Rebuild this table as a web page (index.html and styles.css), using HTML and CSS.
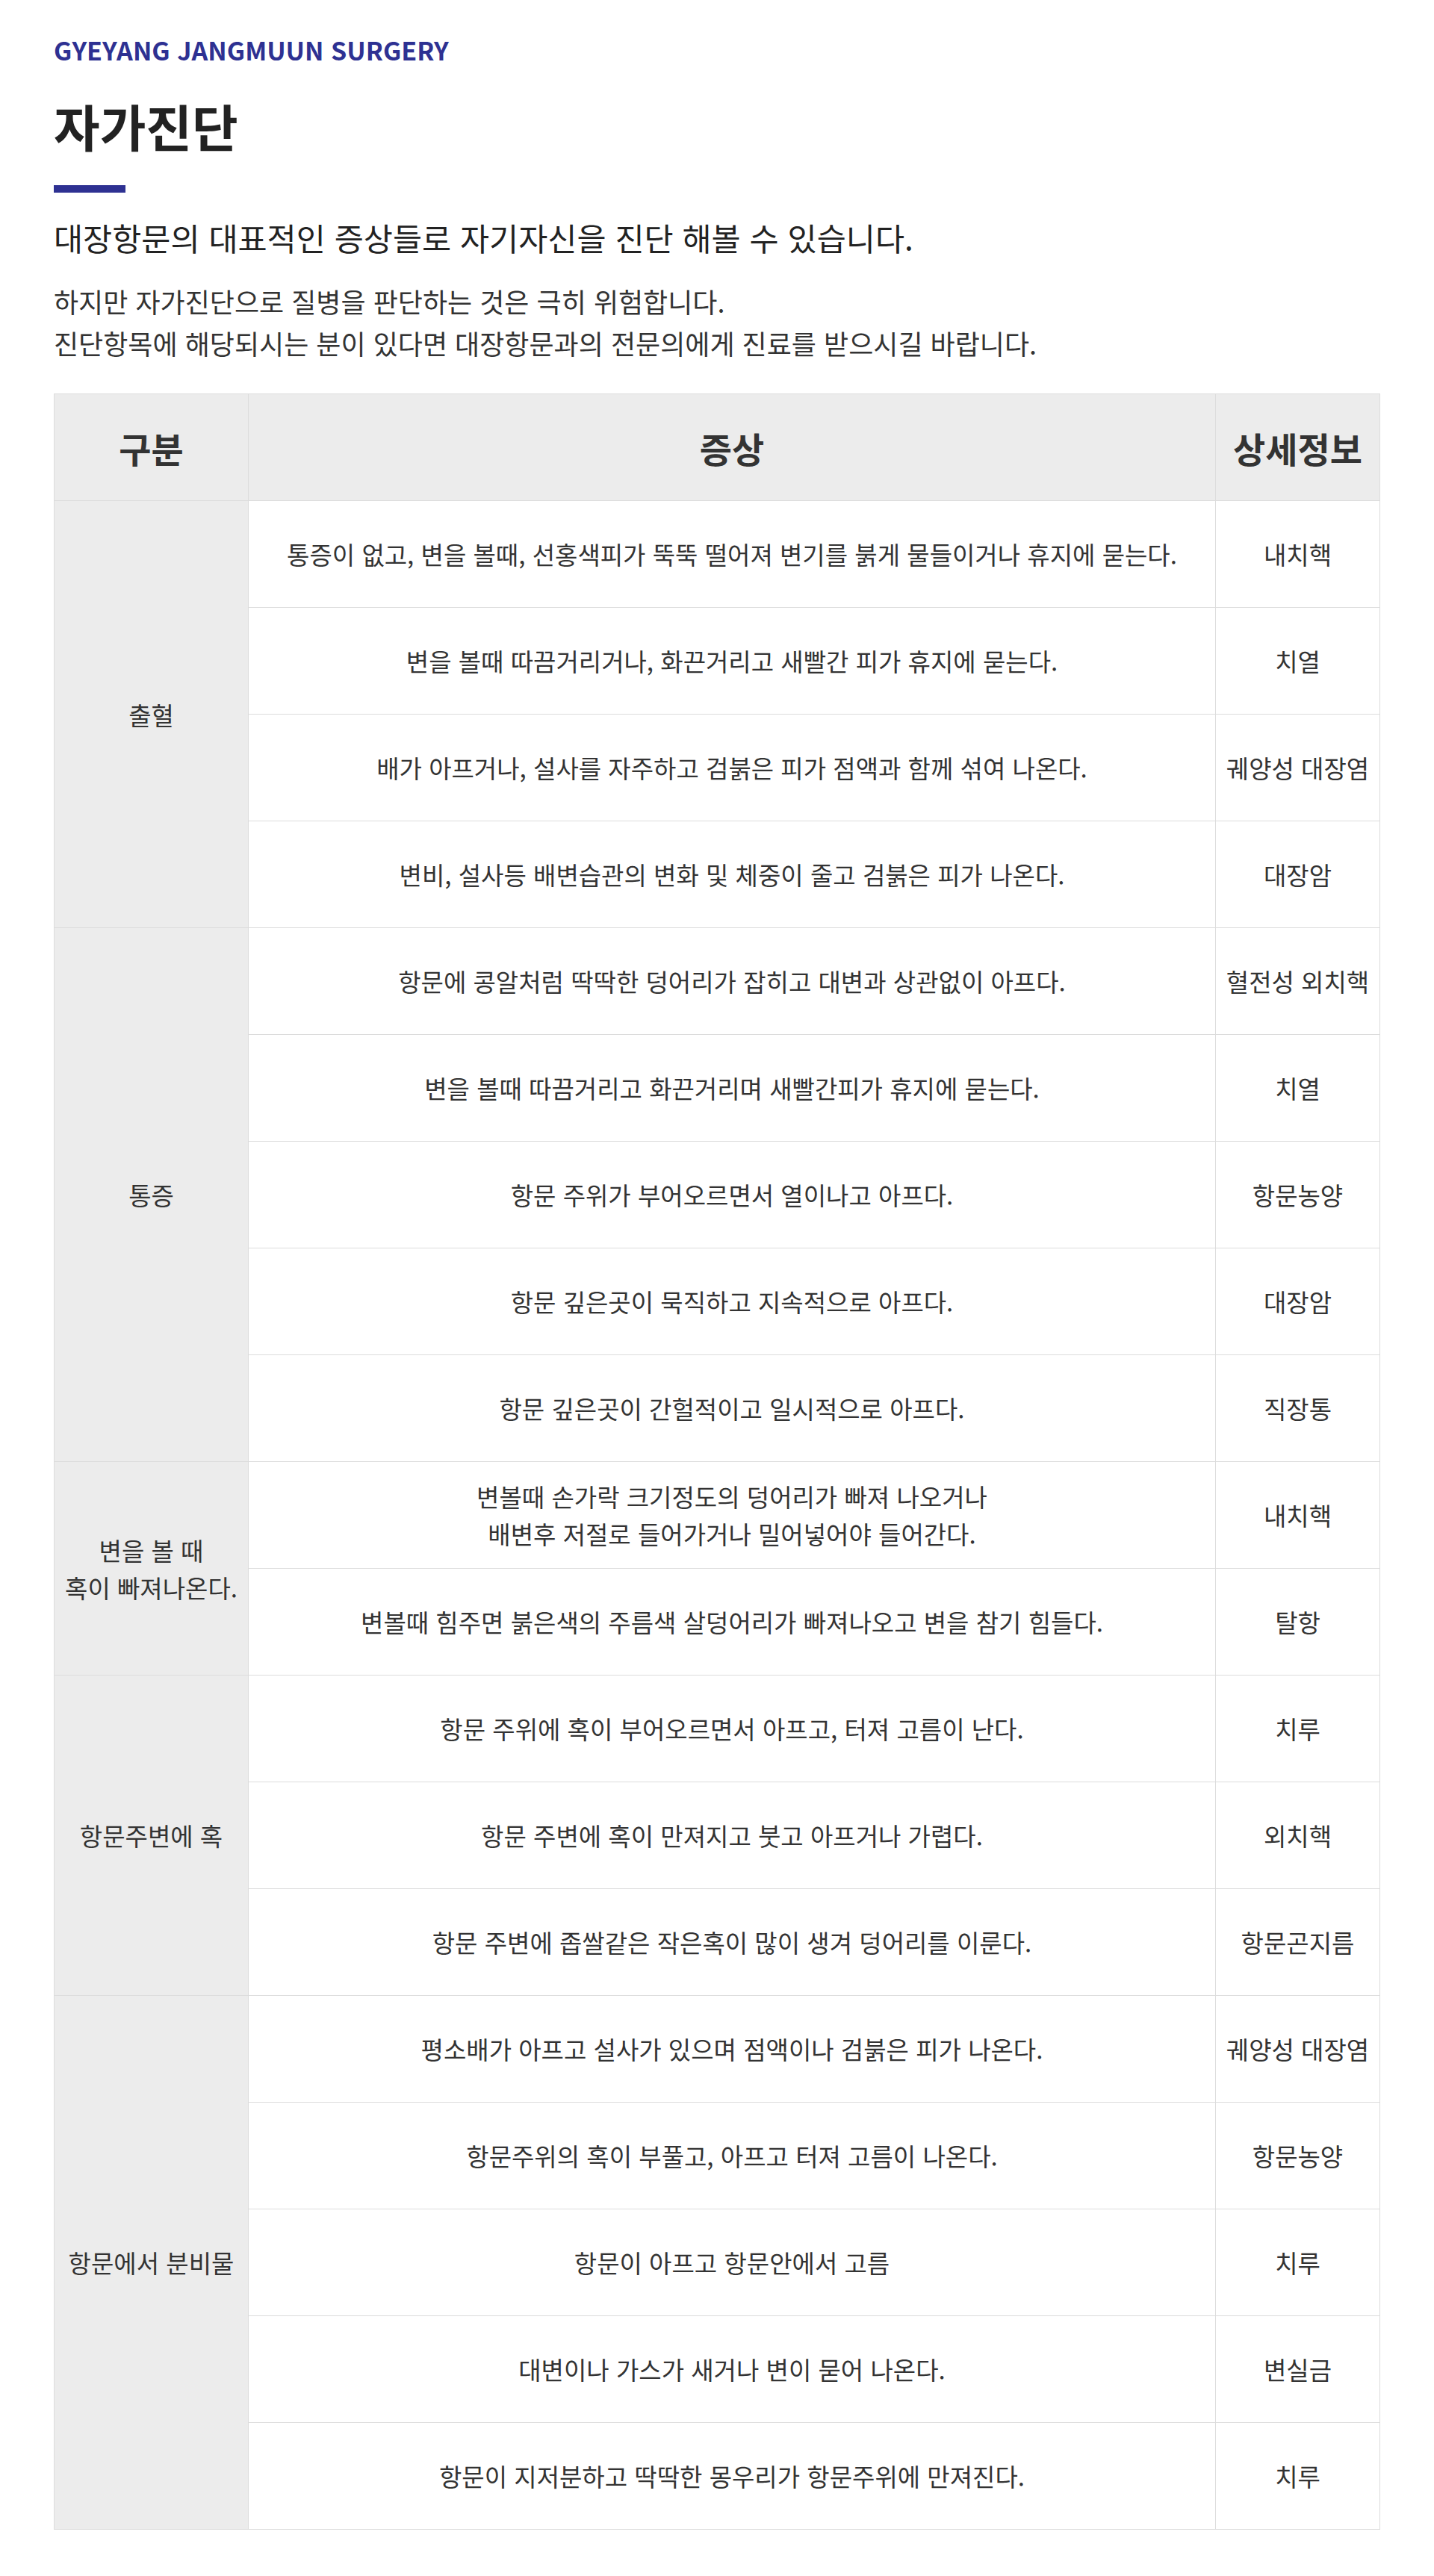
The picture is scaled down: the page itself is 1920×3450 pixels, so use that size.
FILE: index.html
```html
<!DOCTYPE html>
<html lang="ko">
  <head>
    <meta charset="UTF-8" />
    <meta name="viewport" content="width=device-width, initial-scale=1.0" />
    <title>자가진단 - 계양장무언외과</title>
    <link rel="stylesheet" href="styles.css">
  </head>
  <body>
    <main class="page">
      <p class="eyebrow">GYEYANG JANGMUUN SURGERY</p>
      <h1 class="page-title">자가진단</h1>
      <span class="title-bar"></span>
      <p class="lead">대장항문의 대표적인 증상들로 자기자신을 진단 해볼 수 있습니다.</p>
      <p class="notice">
        하지만 자가진단으로 질병을 판단하는 것은 극히 위험합니다.<br />
        진단항목에 해당되시는 분이 있다면 대장항문과의 전문의에게 진료를 받으시길 바랍니다.
      </p>

      <table class="diag-table">
        <colgroup>
          <col class="col-group" />
          <col class="col-symptom" />
          <col class="col-info" />
        </colgroup>
        <thead>
          <tr>
            <th>구분</th>
            <th>증상</th>
            <th>상세정보</th>
          </tr>
        </thead>
        <tbody>
          <tr>
            <th class="group" rowspan="4">출혈</th>
            <td>통증이 없고, 변을 볼때, 선홍색피가 뚝뚝 떨어져 변기를 붉게 물들이거나 휴지에 묻는다.</td>
            <td>내치핵</td>
          </tr>
          <tr>
            <td>변을 볼때 따끔거리거나, 화끈거리고 새빨간 피가 휴지에 묻는다.</td>
            <td>치열</td>
          </tr>
          <tr>
            <td>배가 아프거나, 설사를 자주하고 검붉은 피가 점액과 함께 섞여 나온다.</td>
            <td>궤양성 대장염</td>
          </tr>
          <tr>
            <td>변비, 설사등 배변습관의 변화 및 체중이 줄고 검붉은 피가 나온다.</td>
            <td>대장암</td>
          </tr>

          <tr>
            <th class="group" rowspan="5">통증</th>
            <td>항문에 콩알처럼 딱딱한 덩어리가 잡히고 대변과 상관없이 아프다.</td>
            <td>혈전성 외치핵</td>
          </tr>
          <tr>
            <td>변을 볼때 따끔거리고 화끈거리며 새빨간피가 휴지에 묻는다.</td>
            <td>치열</td>
          </tr>
          <tr>
            <td>항문 주위가 부어오르면서 열이나고 아프다.</td>
            <td>항문농양</td>
          </tr>
          <tr>
            <td>항문 깊은곳이 묵직하고 지속적으로 아프다.</td>
            <td>대장암</td>
          </tr>
          <tr>
            <td>항문 깊은곳이 간헐적이고 일시적으로 아프다.</td>
            <td>직장통</td>
          </tr>

          <tr>
            <th class="group" rowspan="2">변을 볼 때<br />혹이 빠져나온다.</th>
            <td>변볼때 손가락 크기정도의 덩어리가 빠져 나오거나<br />배변후 저절로 들어가거나 밀어넣어야 들어간다.</td>
            <td>내치핵</td>
          </tr>
          <tr>
            <td>변볼때 힘주면 붉은색의 주름색 살덩어리가 빠져나오고 변을 참기 힘들다.</td>
            <td>탈항</td>
          </tr>

          <tr>
            <th class="group" rowspan="3">항문주변에 혹</th>
            <td>항문 주위에 혹이 부어오르면서 아프고, 터져 고름이 난다.</td>
            <td>치루</td>
          </tr>
          <tr>
            <td>항문 주변에 혹이 만져지고 붓고 아프거나 가렵다.</td>
            <td>외치핵</td>
          </tr>
          <tr>
            <td>항문 주변에 좁쌀같은 작은혹이 많이 생겨 덩어리를 이룬다.</td>
            <td>항문곤지름</td>
          </tr>

          <tr>
            <th class="group" rowspan="5">항문에서 분비물</th>
            <td>평소배가 아프고 설사가 있으며 점액이나 검붉은 피가 나온다.</td>
            <td>궤양성 대장염</td>
          </tr>
          <tr>
            <td>항문주위의 혹이 부풀고, 아프고 터져 고름이 나온다.</td>
            <td>항문농양</td>
          </tr>
          <tr>
            <td>항문이 아프고 항문안에서 고름</td>
            <td>치루</td>
          </tr>
          <tr>
            <td>대변이나 가스가 새거나 변이 묻어 나온다.</td>
            <td>변실금</td>
          </tr>
          <tr>
            <td>항문이 지저분하고 딱딱한 몽우리가 항문주위에 만져진다.</td>
            <td>치루</td>
          </tr>
        </tbody>
      </table>
    </main>
  </body>
</html>
```

FILE: styles.css
```css
:root {
  --남색: #2e3192;
  --글자: #333;
  --제목: #222;
  --회색칸: #ececec;
  --선: #dcdcdc;
}

* {
  box-sizing: border-box;
  margin: 0;
  padding: 0;
}

body {
  background: #fff;
  color: var(--글자);
  font-family: "Noto Sans CJK KR", "Noto Sans", sans-serif;
}

.page {
  padding: 47px 72px 60px;
}

.eyebrow {
  font-size: 34px;
  line-height: 40px;
  font-weight: 700;
  color: var(--남색);
}

.page-title {
  margin-top: 41px;
  font-size: 67px;
  line-height: 80px;
  font-weight: 700;
  color: var(--제목);
}

.title-bar {
  display: block;
  width: 96px;
  height: 10px;
  margin-top: 40px;
  background: var(--남색);
}

.lead {
  margin-top: 32px;
  font-size: 42.5px;
  line-height: 56px;
  color: var(--제목);
}

.notice {
  margin-top: 29px;
  font-size: 36px;
  line-height: 56px;
  color: var(--글자);
}

.diag-table {
  width: 100%;
  margin-top: 40px;
  border-collapse: collapse;
  table-layout: fixed;
  text-align: center;
}

.col-group {
  width: 260px;
}

.col-info {
  width: 220px;
}

.diag-table tr {
  height: 143px;
}

.diag-table th,
.diag-table td {
  border: 1px solid var(--선);
  vertical-align: middle;
  padding: 0 8px;
}

.diag-table thead th {
  background: var(--회색칸);
  font-size: 47px;
  font-weight: 700;
  color: var(--글자);
}

.diag-table tbody td,
.diag-table .group {
  font-size: 33px;
  line-height: 50px;
  font-weight: 400;
}

.diag-table .group {
  background: var(--회색칸);
  padding: 0;
}
```
